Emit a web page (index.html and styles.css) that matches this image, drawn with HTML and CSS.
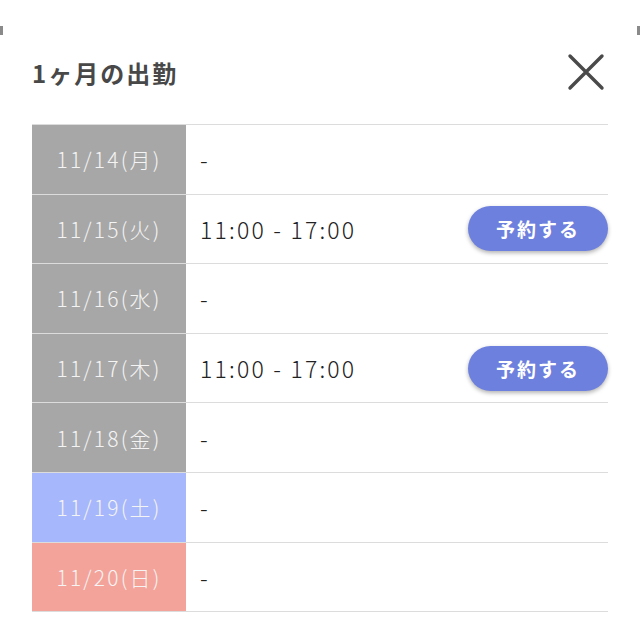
FILE: index.html
```html
<!DOCTYPE html>
<html lang="ja">
<head>
<meta charset="utf-8">
<link rel="stylesheet" href="styles.css">
</head>
<body>
<div class="modal">
  <span class="corner corner-left"></span>
  <span class="corner corner-right"></span>
  <div class="header">
    <h1 class="title">1ヶ月の出勤</h1>
    <svg class="close" width="38" height="38" viewBox="0 0 38 38">
      <path d="M3 3 L35 35 M35 3 L3 35" stroke="#4a4a4a" stroke-width="3.4" stroke-linecap="round" fill="none"/>
    </svg>
  </div>
  <div class="table">
    <div class="row"><div class="date gray">11/14(月)</div><div class="val">-</div></div>
    <div class="row"><div class="date gray">11/15(火)</div><div class="val">11:00 - 17:00<button class="btn">予約する</button></div></div>
    <div class="row"><div class="date gray">11/16(水)</div><div class="val">-</div></div>
    <div class="row"><div class="date gray">11/17(木)</div><div class="val">11:00 - 17:00<button class="btn">予約する</button></div></div>
    <div class="row"><div class="date gray">11/18(金)</div><div class="val">-</div></div>
    <div class="row"><div class="date sat">11/19(土)</div><div class="val">-</div></div>
    <div class="row"><div class="date sun">11/20(日)</div><div class="val">-</div></div>
  </div>
</div>
</body>
</html>
```
FILE: styles.css
```css
* { box-sizing: border-box; }
html, body { margin: 0; padding: 0; background: #fff; }
body {
  font-family: "Noto Sans CJK JP", "Noto Sans", sans-serif;
  color: #333;
}
.modal {
  position: relative;
  width: 640px;
  height: 640px;
  padding: 52px 32px 0 32px;
}
.corner {
  position: absolute;
  top: 26px;
  width: 3px;
  height: 9px;
  background: #8a8a8a;
}
.corner-left { left: 0; }
.corner-right { right: 0; }
.header {
  display: flex;
  align-items: center;
  justify-content: space-between;
  height: 40px;
  margin-bottom: 32px;
}
.title {
  margin: 0;
  font-size: 24px;
  font-weight: 700;
  color: #484848;
  letter-spacing: 2px;
}
.close { margin-right: 3px; }
.table {
  border-top: 1px solid #dcdcdc;
}
.row {
  display: flex;
  height: 69.6px;
  border-bottom: 1px solid #dcdcdc;
}
.date {
  width: 154px;
  flex: none;
  display: flex;
  align-items: center;
  justify-content: center;
  color: #f4f4f4;
  font-size: 21px;
  font-weight: 300;
  letter-spacing: 2.2px;
}
.gray { background: #a7a7a7; }
.sat { background: #a7b7fb; }
.sun { background: #f4a39a; }
.val {
  flex: 1;
  display: flex;
  align-items: center;
  padding-left: 14px;
  font-size: 23px;
  font-weight: 300;
  letter-spacing: 2.2px;
  color: #222;
}
.btn {
  margin-left: auto;
  width: 140px;
  height: 45px;
  border: none;
  border-radius: 23px;
  background: #6d80dd;
  color: #fff;
  font-family: "Noto Sans CJK JP", sans-serif;
  font-weight: 700;
  font-size: 19px;
  letter-spacing: 2px;
  box-shadow: 0 2px 4px rgba(0, 0, 0, 0.3);
  padding: 0;
}
```
